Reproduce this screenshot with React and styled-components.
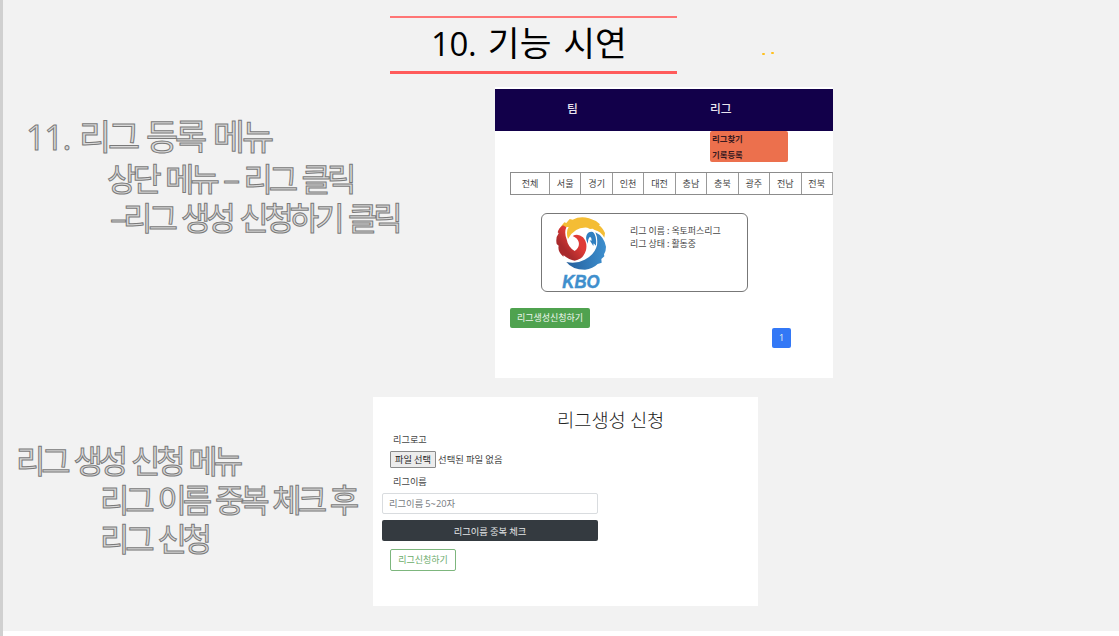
import React from "react";
import styled, { createGlobalStyle } from "styled-components";

const Global = createGlobalStyle`
  *, *::before, *::after { box-sizing: border-box; }
  body { margin: 0; background: #fff; font-family: "Noto Sans CJK KR", "Noto Sans", sans-serif; }
`;

const Slide = styled.main`
  width: 1119px;
  height: 631px;
  background: #f2f2f2;
  border-left: 3px solid #d0d0d0;
  overflow: hidden;
`;
const Page = styled.div`
  height: 636px;
  overflow: hidden;
`;
const Gutter = styled.div`
  width: 3px;
  height: 5px;
  background: #d0d0d0;
`;

const Header = styled.header`
  display: flex;
  height: 87px;
  padding: 16px 0 0 387px;
`;
const Title = styled.h1`
  width: 287px;
  height: 58px;
  margin: 0;
  padding-left: 41px;
  border-top: 2px solid #ff7575;
  border-bottom: 3px solid #ff5b5b;
  font-weight: 400;
  font-size: 34.5px;
  line-height: 47px;
  letter-spacing: 0.2px;
  word-spacing: 3.6px;
  white-space: pre;
  color: #000;
`;
const Digits = styled.span`
  font-family: "Open Sans", "Noto Sans", sans-serif;
  font-size: ${(p) => p.$size || "inherit"};
  letter-spacing: ${(p) => p.$track || 0}px;
  line-height: 1;
`;
const Dots = styled.div`
  display: flex;
  gap: 6px;
  margin: 36px 0 0 85px;
`;
const Dot = styled.i`
  width: 3px;
  height: 2px;
  margin-top: ${(p) => p.$drop}px;
  border-radius: 1px;
  background: #ffc01f;
`;

const Section = styled.section`
  display: flex;
  height: ${(p) => p.$h}px;
`;
const Notes = styled.div`
  flex: none;
  width: ${(p) => p.$w}px;
  padding-top: ${(p) => p.$top}px;
`;
const Note = styled.p`
  margin: 0 0 0 ${(p) => p.$indent}px;
  height: ${(p) => p.$h || 39}px;
  line-height: 39px;
  font-size: ${(p) => p.$size}px;
  letter-spacing: ${(p) => p.$track}px;
  word-spacing: ${(p) => p.$space}px;
  white-space: pre;
  color: #dadada;
  -webkit-text-stroke: 1px #7a7a7a;
`;

const Panel = styled.div`
  width: ${(p) => p.$w}px;
  height: ${(p) => p.$h}px;
  background: #fff;
  color: #444;
  font-size: 9.1px;
  overflow: hidden;
`;
const Nav = styled.nav`
  display: flex;
  height: 42px;
  margin-top: 2px;
  background: #12004a;
  color: #e8e4ee;
  font-size: 11.8px;
  font-weight: 500;
  line-height: 37px;
`;
const NavItem = styled.div`
  position: relative;
  width: ${(p) => p.$w}px;
  padding-left: ${(p) => p.$pad}px;
`;
const Menu = styled.div`
  position: absolute;
  left: 0;
  top: 42px;
  width: 78px;
  height: 31px;
  padding-left: 2px;
  border-radius: 2px;
  background: #ec704d;
  color: #3a1a20;
  font-size: 8.4px;
  font-weight: 700;
  line-height: 16px;
`;
const MenuItem = styled.div`
  height: 16px;
  line-height: 14px;
`;
const Regions = styled.div`
  display: flex;
  height: 23px;
  margin: 41px 0 0 15px;
  border: 1px solid #8c8c8c;
  border-right-color: #aaa;
`;
const Region = styled.div`
  flex: ${(p) => (p.$wide ? "0 0 38px" : "1 1 0")};
  border-left: ${(p) => (p.$wide ? "0" : "1px solid #999")};
  text-align: center;
  line-height: 21px;
`;
const Card = styled.div`
  display: flex;
  width: 207px;
  height: 79px;
  margin: 18px 0 0 46px;
  padding: 1px 0 0 12px;
  border: 1px solid #777;
  border-radius: 6px;
`;
const CardText = styled.div`
  padding: 9px 0 0 21px;
  font-size: 8.95px;
  line-height: 13px;
  white-space: nowrap;
`;
const GreenButton = styled.button`
  display: block;
  width: 80px;
  height: 20px;
  margin: 16px 0 0 15px;
  padding: 0;
  border: 0;
  border-radius: 2px;
  background: #4fa24f;
  color: #eef6ee;
  font: 9px/20px "Noto Sans CJK KR", sans-serif;
`;
const PageButton = styled(GreenButton)`
  width: 19px;
  margin: 0 0 0 277px;
  background: #3378f6;
  font-family: "Open Sans", sans-serif;
`;

const FormTitle = styled.h2`
  margin: 0;
  padding: 8px 0 0 184px;
  height: 34px;
  font-size: 18.7px;
  font-weight: 300;
  line-height: 28px;
  color: #222;
`;
const Label = styled.div`
  height: 18px;
  padding-left: 20px;
  font-size: 9.2px;
  line-height: 17px;
`;
const FileRow = styled.div`
  display: flex;
  align-items: center;
  gap: 2px;
  height: 18px;
  margin: 1px 0 5px 17px;
  font-size: 9.4px;
`;
const FileButton = styled.button`
  width: 46px;
  height: 17px;
  padding: 0;
  border: 1px solid #8a8a8a;
  border-radius: 1px;
  background: #ececec;
  color: #222;
  font: 9.2px/14px "Noto Sans CJK KR", sans-serif;
`;
const NameInput = styled.div`
  width: 216px;
  height: 21px;
  margin: 2px 0 0 9px;
  padding-left: 6px;
  border: 1px solid #d9dcdf;
  border-radius: 2px;
  color: #777c82;
  font-size: 9.3px;
  line-height: 19px;
`;
const CheckButton = styled(GreenButton)`
  width: 216px;
  height: 21px;
  margin: 6px 0 0 9px;
  background: #343a40;
  color: #e4e6e8;
  font-size: 9.3px;
`;
const SubmitButton = styled(GreenButton)`
  width: 66px;
  height: 22px;
  margin: 8px 0 0 17px;
  border: 1px solid #7db67d;
  background: #fff;
  color: #6bac6b;
`;

const Logo = styled.svg`
  flex: none;
  overflow: visible;
`;
const LeagueLogo = () => (
  <Logo width="55" height="75" viewBox="160 45 165 225">
    <defs>
      <linearGradient id="red" x1="0" y1="1" x2="1" y2="0">
        <stop offset="0.3" stopColor="#a92a2c" />
        <stop offset="0.6" stopColor="#df3b37" />
      </linearGradient>
      <linearGradient id="blue" x1="0" y1="0" x2="1" y2="0">
        <stop offset="0" stopColor="#245f9c" />
        <stop offset="1" stopColor="#3d8fce" />
      </linearGradient>
    </defs>
    <path d="M180 80 L191 67 L197 69 L207 57 L216 59 Q239 47 265 55 Q284 60 298 73 L295 76 Q305 82 313 99 L311 113 Q300 94 282 90 L276 86 L268 87 L260 83 Q222 80 202 117 Q195 96 204 81 Q192 80 180 87 Z" fill="#f4bd35" />
    <path d="M187 76 L197 82 Q190 98 198 118 Q202 142 222 153 Q238 142 234 126 Q231 114 216 108 Q232 99 247 112 Q261 127 256 151 Q248 178 222 182 Q206 181 189 166 L188 170 Q170 154 174 137 L168 132 Q164 113 174 100 L171 97 Q174 84 187 76 Z" fill="url(#red)" />
    <path d="M284 97 Q309 108 316 140 Q316 154 310 163 L311 169 L302 177 L303 188 L291 192 Q277 206 253 209 Q214 209 197 186 Q226 193 252 179 Q282 164 289 136 Q292 114 284 97 Z" fill="url(#blue)" />
    <path d="M262 131 Q253 117 258 105 Q264 93 277 96 Q289 107 286 137 L279 130 L278 138 L267 121 L273 122 Q273 112 268 110 Q261 116 262 131 Z" fill="#2f7fc0" />
    <text x="185" y="265" fontFamily="Liberation Sans, sans-serif" fontSize="56" fontWeight="700" fontStyle="italic" fill="#3f8fcd" stroke="#3f8fcd" strokeWidth="1.5" textLength="112" lengthAdjust="spacingAndGlyphs">KBO</text>
  </Logo>
);

const regions = ["전체", "서울", "경기", "인천", "대전", "충남", "충북", "광주", "전남", "전북"];

export default function App() {
  return (
    <Page>
      <Global />
      <Slide>
        <Header>
          <Title><Digits $size="33px" $track={-0.4}>10.</Digits> 기능 시연</Title>
          <Dots>
            <Dot $drop={1} />
            <Dot $drop={0} />
          </Dots>
        </Header>

        <Section $h={310}>
          <Notes $w={492} $top={28}>
            <Note $indent={23} $h={43} $size={35} $track={-3.1} $space={4}><Digits $size="34px" $track={-1.2}>11.</Digits> 리그 등록 메뉴</Note>
            <Note $indent={104} $size={32} $track={-4.1} $space={4.3}>상단 메뉴 – 리그 클릭</Note>
            <Note $indent={107} $size={32} $track={-4.1} $space={4.3}>–리그 생성 신청하기 클릭</Note>
          </Notes>
          <Panel $w={338} $h={291}>
            <Nav>
              <NavItem $w={215} $pad={72}>팀</NavItem>
              <NavItem $w={78} $pad={0}>
                리그
                <Menu>
                  <MenuItem>리그찾기</MenuItem>
                  <MenuItem>기록등록</MenuItem>
                </Menu>
              </NavItem>
            </Nav>
            <Regions>
              {regions.map((name, i) => (
                <Region key={name} $wide={i === 0}>{name}</Region>
              ))}
            </Regions>
            <Card>
              <LeagueLogo />
              <CardText>
                <div>리그 이름 : 옥토퍼스리그</div>
                <div>리그 상태 : 활동중</div>
              </CardText>
            </Card>
            <GreenButton>리그생성신청하기</GreenButton>
            <PageButton>1</PageButton>
          </Panel>
        </Section>

        <Section $h={234}>
          <Notes $w={370} $top={43}>
            <Note $indent={13} $size={32} $track={-4.1} $space={3.7}>리그 생성 신청 메뉴</Note>
            <Note $indent={97} $size={32} $track={-4.1} $space={3.7}>리그 이름 중복 체크 후</Note>
            <Note $indent={97} $size={32} $track={-4.1} $space={3.7}>리그 신청</Note>
          </Notes>
          <Panel $w={385} $h={209}>
            <FormTitle>리그생성 신청</FormTitle>
            <Label>리그로고</Label>
            <FileRow>
              <FileButton>파일 선택</FileButton>
              <span>선택된 파일 없음</span>
            </FileRow>
            <Label>리그이름</Label>
            <NameInput>리그이름 <Digits>5~20</Digits>자</NameInput>
            <CheckButton>리그이름 중복 체크</CheckButton>
            <SubmitButton>리그신청하기</SubmitButton>
          </Panel>
        </Section>
      </Slide>
      <Gutter />
    </Page>
  );
}
